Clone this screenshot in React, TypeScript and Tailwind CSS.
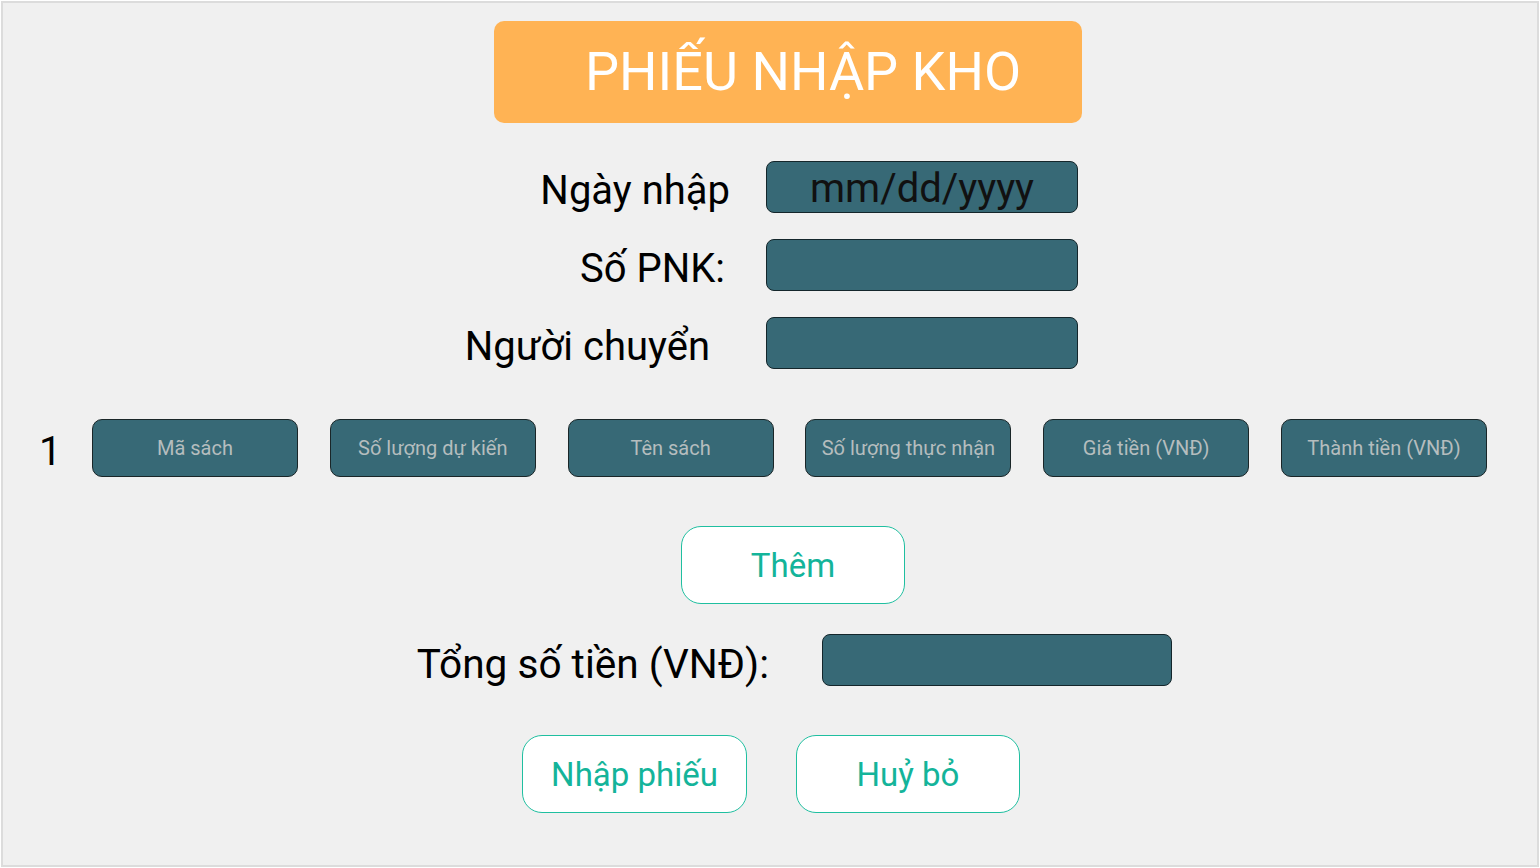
import React from 'react';

const fields = [
  { label: 'Ngày nhập', pad: 'pr-[36px]', value: 'mm/dd/yyyy' },
  { label: 'Số PNK:', pad: 'pr-[41px]', value: '' },
  { label: 'Người chuyển', pad: 'pr-[56px]', value: '' },
];

const columns = [
  'Mã sách',
  'Số lượng dự kiến',
  'Tên sách',
  'Số lượng thực nhận',
  'Giá tiền (VNĐ)',
  'Thành tiền (VNĐ)',
];

const App = () => {
  return (
    <div className="w-[1540px] h-[868px] bg-white p-px" style={{ fontFamily: 'Roboto, "Noto Sans", sans-serif' }}>
      <div className="h-[866px] border-2 border-[#dcdcdc] bg-[#f0f0f0] flex flex-col">
        {/* Title */}
        <div className="mt-[18px] ml-[491px] w-[588px] h-[102px] rounded-[10px] bg-[#ffb354] flex items-center pl-[91px]">
          <span className="text-[54px] leading-none text-white">PHIẾU NHẬP KHO</span>
        </div>

        {/* Header fields */}
        <div className="mt-[38px] flex flex-col gap-[26px]">
          {fields.map((f) => (
            <div key={f.label} className="flex items-center">
              <div className={`w-[763px] text-right pt-[7px] text-[40px] leading-none text-black ${f.pad}`}>{f.label}</div>
              <div className="w-[312px] h-[52px] rounded-[8px] border border-[#14262b] bg-[#376976] flex items-center justify-center pt-[3px] text-[40px] leading-none text-[#111]">
                {f.value}
              </div>
            </div>
          ))}
        </div>

        {/* Item row */}
        <div className="mt-[50px] flex items-center">
          <span className="ml-[36px] w-[53px] pt-[7px] text-[40px] leading-none text-black">1</span>
          <div className="flex gap-[31.8px]">
            {columns.map((c) => (
              <div
                key={c}
                className="w-[206px] h-[58px] rounded-[10px] border border-[#1a2628] bg-[#376976] flex items-center justify-center text-[20px] leading-none text-[#b5bdbe]"
              >
                {c}
              </div>
            ))}
          </div>
        </div>

        {/* Add */}
        <button className="mt-[49px] ml-[678px] w-[224px] h-[78px] rounded-[20px] border border-[#1fbfa0] bg-white text-[33px] leading-none text-[#14b49a]">
          Thêm
        </button>

        {/* Total */}
        <div className="mt-[30px] flex items-center">
          <div className="w-[819px] text-right pr-[53px] pt-[8px] text-[40.6px] leading-none text-black">Tổng số tiền (VNĐ):</div>
          <div className="w-[350px] h-[52px] rounded-[8px] border border-[#14262b] bg-[#376976]" />
        </div>

        {/* Actions */}
        <div className="mt-[49px] ml-[519px] flex gap-[49px]">
          <button className="w-[225px] h-[78px] rounded-[20px] border border-[#1fbfa0] bg-white text-[33px] leading-none text-[#14b49a]">
            Nhập phiếu
          </button>
          <button className="w-[224px] h-[78px] rounded-[20px] border border-[#1fbfa0] bg-white text-[33px] leading-none text-[#14b49a]">
            Huỷ bỏ
          </button>
        </div>
      </div>
    </div>
  );
};

export default App;
